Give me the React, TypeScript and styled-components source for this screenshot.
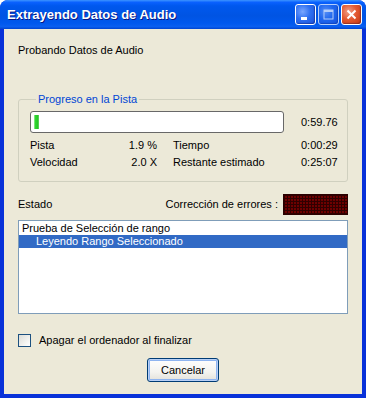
import React from "react";
import { createGlobalStyle, styled } from "styled-components";

const GlobalStyle = createGlobalStyle`
  html, body {
    margin: 0;
    padding: 0;
    background: #ffffff;
  }
  body {
    font-family: "Liberation Sans", Arial, sans-serif;
    font-size: 11px;
    color: #000000;
  }
`;

const Window = styled.div`
  width: 366px;
  height: 398px;
  display: flex;
  flex-direction: column;
  background: #0831d9;
  border-radius: 8px 8px 0 0;
  overflow: hidden;
  box-sizing: border-box;
`;

const TitleBar = styled.div`
  height: 29px;
  flex: none;
  display: flex;
  align-items: center;
  padding: 0 4px 0 7px;
  background: linear-gradient(
    to bottom,
    #3d95ff 0%,
    #0a61ff 8%,
    #0058ee 20%,
    #0054e3 55%,
    #0058ee 80%,
    #0a5ff0 92%,
    #0043cf 100%
  );
`;

const TitleText = styled.div`
  flex: 1;
  color: #ffffff;
  font-family: "Liberation Sans", Arial, sans-serif;
  font-weight: bold;
  font-size: 13px;
  text-shadow: 1px 1px 0 #0a1883;
  white-space: nowrap;
`;

const TitleButtons = styled.div`
  display: flex;
  gap: 2px;
`;

const CaptionButton = styled.div<{ $close?: boolean; $dim?: boolean }>`
  width: 21px;
  height: 21px;
  box-sizing: border-box;
  border: 1px solid #ffffff;
  border-radius: 3px;
  display: flex;
  align-items: center;
  justify-content: center;
  opacity: ${({ $dim }) => ($dim ? 0.7 : 1)};
  background: ${({ $close }) =>
    $close
      ? "radial-gradient(circle at 35% 35%, #f0a08a 0%, #e35a32 45%, #c2350f 100%)"
      : "radial-gradient(circle at 35% 35%, #7aa7ff 0%, #2e6ff0 45%, #1b4fd8 100%)"};
  box-shadow: inset -1px -1px 1px rgba(0, 0, 60, 0.3);
`;

const Client = styled.div`
  flex: 1;
  margin: 0 4px 4px 4px;
  background: #ece9d8;
  display: flex;
  flex-direction: column;
  padding: 15px 14px 0 14px;
  box-sizing: border-box;
`;

const Text = styled.div`
  line-height: 13px;
  white-space: nowrap;
`;

const Heading = styled(Text)`
  margin-bottom: 36px;
`;

const GroupBox = styled.fieldset`
  margin: 0;
  width: 330px;
  min-width: 0;
  border: 1px solid #d0d0bf;
  border-radius: 3px;
  padding: 5px 4px 9px 11px;
  height: 89px;
  box-sizing: border-box;
`;

const GroupLegend = styled.legend`
  color: #0046d5;
  padding: 0 2px;
  margin-left: 6px;
  line-height: 13px;
`;

const ProgressRow = styled.div`
  display: flex;
  align-items: center;
  gap: 17px;
  margin-bottom: 6px;
`;

const ProgressTrack = styled.div`
  flex: none;
  width: 254px;
  height: 22px;
  box-sizing: border-box;
  border: 1px solid #686868;
  border-radius: 3px;
  background: #ffffff;
  padding: 3px 3px;
  display: flex;
`;

const ProgressChunk = styled.div`
  height: 100%;
  background: linear-gradient(
    to right,
    #9ee89e 0%,
    #2fd62f 30%,
    #28c828 70%,
    #6ad56a 100%
  );
`;

const StatsGrid = styled.div`
  display: grid;
  grid-template-columns: 127px 112px auto;
  column-gap: 16px;
  row-gap: 4px;
`;

const StatPair = styled.div`
  display: flex;
  justify-content: space-between;
  line-height: 13px;
`;

const StatusRow = styled.div`
  display: flex;
  align-items: center;
  justify-content: space-between;
  margin-top: 11px;
  height: 22px;
`;

const ErrorGroup = styled.div`
  display: flex;
  align-items: center;
  gap: 5px;
`;

const LedPanel = styled.div`
  width: 65px;
  height: 21px;
  box-sizing: border-box;
  border: 1px solid #2a0000;
  background-color: #6e0000;
  background-image: linear-gradient(to right, #300000 1px, transparent 1px),
    linear-gradient(to bottom, #300000 1px, transparent 1px);
  background-size: 3px 3px;
`;

const ListBox = styled.div`
  margin-top: 5px;
  height: 94px;
  box-sizing: border-box;
  border: 1px solid #7f9db9;
  background: #ffffff;
  padding: 1px 0 0 0;
`;

const ListItem = styled.div<{ $selected?: boolean; $indent?: number }>`
  height: 13px;
  line-height: 13px;
  padding-left: ${({ $indent }) => 3 + ($indent ?? 0)}px;
  background: ${({ $selected }) => ($selected ? "#316ac5" : "transparent")};
  color: ${({ $selected }) => ($selected ? "#ffffff" : "#000000")};
  white-space: nowrap;
`;

const CheckRow = styled.label`
  display: flex;
  align-items: center;
  gap: 8px;
  margin-top: 20px;
  line-height: 13px;
`;

const CheckBox = styled.span`
  width: 13px;
  height: 13px;
  box-sizing: border-box;
  border: 1px solid #1c5180;
  background: linear-gradient(135deg, #dcdcd7 0%, #f6f6f3 70%, #ffffff 100%);
`;

const ButtonRow = styled.div`
  display: flex;
  justify-content: center;
  margin-top: 11px;
`;

const XpButton = styled.button`
  width: 72px;
  height: 24px;
  border: 1px solid #003c74;
  border-radius: 3px;
  font-family: "Liberation Sans", Arial, sans-serif;
  font-size: 11px;
  color: #000000;
  background: linear-gradient(to bottom, #ffffff 0%, #f3f3ef 60%, #e6e5df 90%, #d6d0c5 100%);
  box-shadow: inset 0 0 0 1px #b8d0f6, inset 0 0 0 2px #8eb4f0;
  padding: 0;
`;

const MinIcon = () => (
  <svg width="13" height="13" viewBox="0 0 13 13">
    <rect x="2" y="9" width="6" height="3" fill="#ffffff" />
  </svg>
);

const MaxIcon = () => (
  <svg width="13" height="13" viewBox="0 0 13 13">
    <rect x="2" y="2" width="9" height="9" fill="none" stroke="#ffffff" strokeWidth="1" />
    <rect x="2" y="2" width="9" height="2" fill="#ffffff" />
  </svg>
);

const CloseIcon = () => (
  <svg width="13" height="13" viewBox="0 0 13 13">
    <path d="M2.5 2.5 L10.5 10.5 M10.5 2.5 L2.5 10.5" stroke="#ffffff" strokeWidth="2" />
  </svg>
);

export default function App() {
  const progress = 1.9;
  return (
    <>
      <GlobalStyle />
      <Window>
        <TitleBar>
          <TitleText>Extrayendo Datos de Audio</TitleText>
          <TitleButtons>
            <CaptionButton>
              <MinIcon />
            </CaptionButton>
            <CaptionButton $dim>
              <MaxIcon />
            </CaptionButton>
            <CaptionButton $close>
              <CloseIcon />
            </CaptionButton>
          </TitleButtons>
        </TitleBar>
        <Client>
          <Heading>Probando Datos de Audio</Heading>
          <GroupBox>
            <GroupLegend>Progreso en la Pista</GroupLegend>
            <ProgressRow>
              <ProgressTrack>
                <ProgressChunk style={{ width: `${Math.max(5, progress * 2.6)}px` }} />
              </ProgressTrack>
              <Text>0:59.76</Text>
            </ProgressRow>
            <StatsGrid>
              <StatPair>
                <span>Pista</span>
                <span>1.9 %</span>
              </StatPair>
              <Text>Tiempo</Text>
              <Text>0:00:29</Text>
              <StatPair>
                <span>Velocidad</span>
                <span>2.0 X</span>
              </StatPair>
              <Text>Restante estimado</Text>
              <Text>0:25:07</Text>
            </StatsGrid>
          </GroupBox>
          <StatusRow>
            <Text>Estado</Text>
            <ErrorGroup>
              <Text>Corrección de errores :</Text>
              <LedPanel />
            </ErrorGroup>
          </StatusRow>
          <ListBox>
            <ListItem>Prueba de Selección de rango</ListItem>
            <ListItem $selected $indent={14}>
              Leyendo Rango Seleccionado
            </ListItem>
          </ListBox>
          <CheckRow>
            <CheckBox />
            <span>Apagar el ordenador al finalizar</span>
          </CheckRow>
          <ButtonRow>
            <XpButton>Cancelar</XpButton>
          </ButtonRow>
        </Client>
      </Window>
    </>
  );
}
